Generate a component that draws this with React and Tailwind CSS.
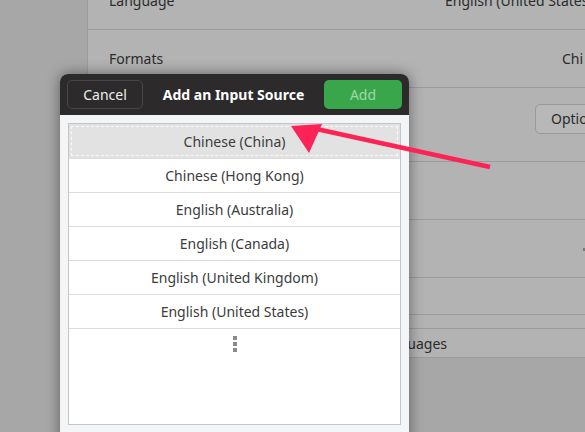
import React from "react";

const rows = [
  "Chinese (China)",
  "Chinese (Hong Kong)",
  "English (Australia)",
  "English (Canada)",
  "English (United Kingdom)",
  "English (United States)",
];

export default function App() {
  return (
    <div
      className="relative w-[585px] h-[432px] overflow-hidden bg-[#a7a7a8] text-[14px]"
      style={{ fontFamily: '"Noto Sans", "Open Sans", sans-serif' }}
    >
      {/* background settings window (dimmed) */}
      <div className="flex h-full">
        <div className="w-[88px] shrink-0 bg-[#a7a7a8] border-r border-[#9c9c9c]" />
        <div className="flex-1 flex flex-col">
          <div className="bg-[#b3b3b3] flex flex-col">
            <div className="-mt-[28px] h-[58px] flex items-center justify-between pl-[21px] border-b border-[#9b9b9b] text-[#2b2b2b]">
              <span>Language</span>
              <span className="mr-[-40px] w-[180px] whitespace-nowrap">English (United States)</span>
            </div>
            <div className="h-[58px] flex items-center justify-between pl-[21px] border-b border-[#9b9b9b] text-[#2b2b2b]">
              <span>Formats</span>
              <span className="mr-[-10px] w-[33px] overflow-hidden">Chi</span>
            </div>
            <div className="h-[73px] flex items-center justify-end">
              <div className="mt-[-12px] h-[30px] w-[60px] mr-[-10px] rounded-[5px] border border-[#999] bg-[#b8b8b8] flex items-center pl-[15px] text-[#2b2b2b] overflow-hidden">
                Options
              </div>
            </div>
            <div className="h-[58px] border-t border-[#9b9b9b]" />
            <div className="h-[58px] border-t border-[#9b9b9b] relative">
              <div className="absolute right-0 top-[28px] w-[2px] h-[3px] bg-[#7a7a7a]" />
            </div>
            <div className="h-[37px] border-t border-[#9b9b9b]" />
            <div className="h-[14px] border-t border-[#9b9b9b]" />
            <div className="h-[30px] border-t border-b border-[#9b9b9b] flex items-center text-[#2b2b2b]">
              <span className="w-[359px] text-right whitespace-nowrap">Manage Installed Languages</span>
            </div>
          </div>
          <div className="flex-1 bg-[#a7a7a8]" />
        </div>
      </div>

      {/* dialog */}
      <div className="absolute left-[60px] top-[74px] w-[349px] h-[380px] rounded-t-[8px] overflow-hidden bg-[#f4f5f7] shadow-[0_0_14px_rgba(0,0,0,0.45)] flex flex-col">
        <div className="h-[41px] bg-[#2c2a2a] flex items-center px-[7px] shrink-0">
          <div className="w-[76px] h-[29px] rounded-[5px] border border-[#484646] bg-[#2c2a2a] flex items-center justify-center text-[#eeeeec]">
            Cancel
          </div>
          <div className="flex-1 text-center font-bold text-white">Add an Input Source</div>
          <div className="w-[78px] h-[29px] rounded-[5px] bg-[#3aa64c] flex items-center justify-center text-[#9fd9a8]">
            Add
          </div>
        </div>
        <div className="px-[8px] pt-[8px]">
          <div className="h-[302px] border border-[#c2c5ca] bg-white flex flex-col">
            {rows.map((r, i) => (
              <div
                key={r}
                className={
                  i === 0
                    ? "h-[34px] bg-[#e2e2e2] p-[2px]"
                    : "h-[34px] border-t border-[#dcdcdc] text-[#3c3c3c] flex items-center justify-center"
                }
              >
                {i === 0 ? (
                  <div className="h-full border border-dashed border-[#fafafa] flex items-center justify-center text-[#3c3c3c]">
                    {r}
                  </div>
                ) : (
                  r
                )}
              </div>
            ))}
            <div className="border-t border-[#dcdcdc] flex flex-col items-center pt-[7px] gap-[2px]">
              <div className="w-[4px] h-[4px] bg-[#8a8a8a]" />
              <div className="w-[4px] h-[4px] bg-[#8a8a8a]" />
              <div className="w-[4px] h-[4px] bg-[#8a8a8a]" />
            </div>
          </div>
        </div>
      </div>

      {/* annotation arrow */}
      <svg className="absolute left-0 top-0" width="585" height="432" viewBox="0 0 585 432">
        <line x1="490" y1="167" x2="312" y2="128" stroke="#fd2356" strokeWidth="4.5" strokeLinecap="butt" />
        <polygon points="291,126 322,124 309,153" fill="#fd2356" />
      </svg>
    </div>
  );
}
